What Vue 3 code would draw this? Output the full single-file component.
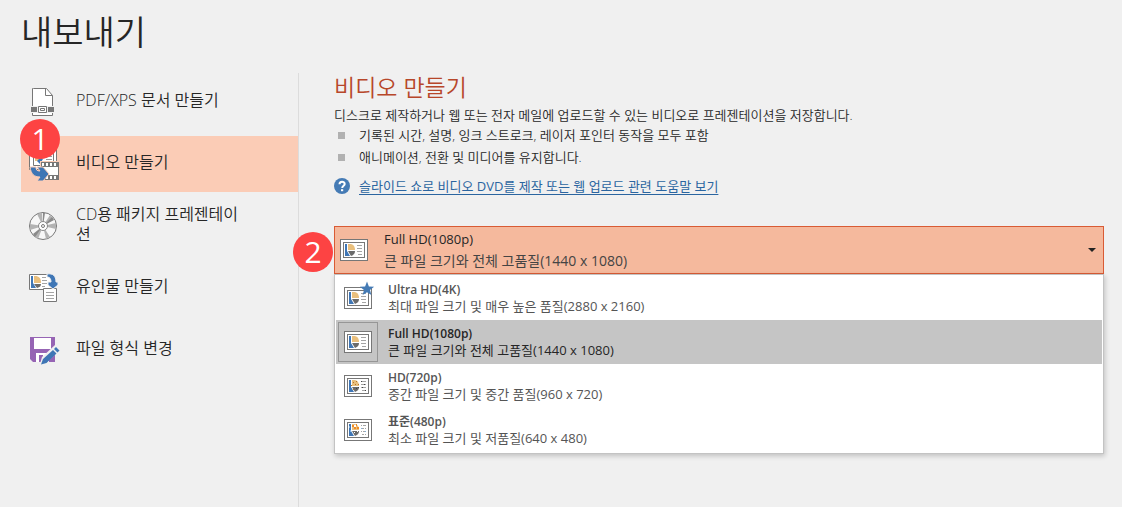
<script setup>
import { computed, ref } from 'vue'

const tasks = [
  { id: 'pdf', label: 'PDF/XPS 문서 만들기' },
  { id: 'video', label: '비디오 만들기', step: 1 },
  { id: 'cd', label: 'CD용 패키지 프레젠테이션' },
  { id: 'handout', label: '유인물 만들기' },
  { id: 'filetype', label: '파일 형식 변경' },
]
const activeTask = ref('video')

const features = [
  '기록된 시간, 설명, 잉크 스트로크, 레이저 포인터 동작을 모두 포함',
  '애니메이션, 전환 및 미디어를 유지합니다.',
]

const qualities = [
  { id: 'uhd', name: 'Ultra HD(4K)', detail: '최대 파일 크기 및 매우 높은 품질(2880 x 2160)' },
  { id: 'fhd', name: 'Full HD(1080p)', detail: '큰 파일 크기와 전체 고품질(1440 x 1080)' },
  { id: 'hd', name: 'HD(720p)', detail: '중간 파일 크기 및 중간 품질(960 x 720)' },
  { id: 'sd', name: '표준(480p)', detail: '최소 파일 크기 및 저품질(640 x 480)' },
]
const chosen = ref('fhd')
const quality = computed(() => qualities.find((q) => q.id === chosen.value))
const open = ref(true)

function choose(id) {
  chosen.value = id
  open.value = false
}
</script>

<template>
  <div class="page">
    <svg class="defs" aria-hidden="true">
      <symbol id="slide" viewBox="0 0 28 22">
        <rect x=".5" y=".5" width="27" height="21" fill="#fff" stroke="#777" />
        <rect x="3.5" y="3.5" width="21" height="15" fill="#fff" stroke="#777" />
        <path d="M5 5h2v7l3 5H5z" fill="#3f76b5" />
        <path d="M8 5h2c3 0 5 2 5 6H8z" fill="#e9bf7d" />
        <path d="M8 12h7c0 2-1 4-4 5z" fill="#6b6b6b" />
        <path d="M17 6.5h5M17 9.5h5M17 12.5h5M18 15.5h4" stroke="#a5a5a5" />
      </symbol>
    </svg>

    <h1>내보내기</h1>

    <div class="body">
      <nav class="tasks" aria-label="내보내기">
        <button
          v-for="t in tasks"
          :key="t.id"
          type="button"
          class="task"
          :class="{ active: t.id === activeTask }"
          @click="activeTask = t.id"
        >
          <svg v-if="t.id === 'pdf'" class="icon" viewBox="0 0 30 30" aria-hidden="true">
            <path d="M5.500 1.500h13l6 7v20h-20v-27z" fill="#fff" stroke="#777" />
            <path d="M17.500 1.500v7h7" fill="none" stroke="#777" />
            <path d="M2 19h25v7H2z" fill="#f0f0f0" />
            <path d="M3 20h6v5H3zM20 20h6v5h-6z" fill="#777" />
            <path d="M10.500 19.500h8v6h-8z" fill="#fff" stroke="#777" />
            <path d="M12.500 21.500h4v2h-4z" fill="#fff" stroke="#777" />
          </svg>
          <svg v-else-if="t.id === 'video'" class="icon" viewBox="0 0 30 30" aria-hidden="true">
            <path d="M1.500 0v20.500h27V0z" fill="#fff" stroke="#777" />
            <path d="M5.500 0v16.500h20V0z" fill="#fff" stroke="#777" />
            <path d="M7 7h4v5H7z" fill="#e9bf7d" />
            <path d="M9 12l4-4 2 2-3 5z" fill="#3f76b5" />
            <path d="M18 7.500h6M18 10.500h6" stroke="#999" />
            <path d="M12 12h20v20H12z" fill="#fbccb6" />
            <path d="M13 13h18v18H13z" fill="#777" />
            <path d="M14 18h16v8H14z" fill="#fff" />
            <path d="M14 15.500h16M14 28.500h16" stroke="#fff" stroke-width="3" stroke-dasharray="2 2" />
            <path d="M2 18h6c0 3 1 4 4 4l-3-4h6l6 7-6 7H9l3-4c-6 0-9-3-10-10z" fill="#3f76b5" stroke="#fbccb6" />
          </svg>
          <svg v-else-if="t.id === 'cd'" class="icon" viewBox="0 0 30 30" aria-hidden="true">
            <circle cx="15" cy="15" r="13.500" fill="#f7f7f7" stroke="#777" />
            <path d="M15 15 9 3l5-1zM15 15 22 4l4 4zM15 15 2 13v6zM15 15 6 25l4 3zM15 15l3 13 4-2zM15 15l13-3v6z" fill="#b3b3b3" />
            <path d="M15 15 15 2h2zM15 15l9-9 2 3zM15 15 5 23l2 3z" fill="#8a8a8a" />
            <circle cx="15" cy="15" r="4.500" fill="#fff" stroke="#888" />
            <circle cx="15" cy="15" r="1.500" fill="#fff" stroke="#777" />
          </svg>
          <svg v-else-if="t.id === 'handout'" class="icon" viewBox="0 0 30 30" aria-hidden="true">
            <path d="M1.500 1.500h22v15h-22z" fill="#fff" stroke="#777" />
            <path d="M3 3h2v7l3 5H3z" fill="#3f76b5" />
            <path d="M6 3h1c4 0 6 2 6 7H6z" fill="#e9bf7d" />
            <path d="M6 11h7c0 2-1 3-4 4z" fill="#6b6b6b" />
            <path d="M14 4.500h4M14 7.500h5M14 10.500h5M14 13.500h3" stroke="#a5a5a5" />
            <path d="M15.500 15.500h13v13h-13z" fill="#fff" stroke="#777" />
            <path d="M18 19.500h8M18 22.500h8M18 25.500h8" stroke="#a5a5a5" />
            <path d="M19 1c6-1 9 2 9 8h2v3l-5 4-5-4V9h3c0-3-1-5-4-5z" fill="#3f76b5" stroke="#f0f0f0" />
          </svg>
          <svg v-else class="icon" viewBox="0 0 30 30" aria-hidden="true">
            <path d="M2 2h25v25H5l-3-3z" fill="#9664b4" />
            <path d="M6 3h17v11H6z" fill="#fff" />
            <path d="M8 18h13v9H8z" fill="#fff" />
            <path d="M11 20h4v7h-4z" fill="#9664b4" />
            <path d="M12 29 14 22 27 10 32 15 19 27z" fill="#f0f0f0" />
            <path d="M13 29.500 15 24 25 15 28.500 18.500 18.500 28zM26 14l2-2 3.500 3.500-2 2z" fill="#3f76b5" />
          </svg>
          <span class="label">{{ t.label }}</span>
          <span v-if="t.step" class="badge on-task">{{ t.step }}</span>
        </button>
      </nav>

      <main class="panel">
        <h2>비디오 만들기</h2>
        <p class="intro">디스크로 제작하거나 웹 또는 전자 메일에 업로드할 수 있는 비디오로 프레젠테이션을 저장합니다.</p>
        <ul class="features">
          <li v-for="f in features" :key="f">{{ f }}</li>
        </ul>
        <div class="help">
          <svg viewBox="0 0 16 16" aria-hidden="true">
            <circle cx="8" cy="8" r="8" fill="#457bb5" />
            <path d="M5.500 6.300c0-3.300 5.200-3.200 5.200-.3C10.700 7.700 8.200 7.800 8.200 10" fill="none" stroke="#fff" stroke-width="2" />
            <path d="M7 11.200h2.200v2H7z" fill="#fff" />
          </svg>
          <a href="#help">슬라이드 쇼로 비디오 DVD를 제작 또는 웹 업로드 관련 도움말 보기</a>
        </div>

        <div class="picker">
          <button
            type="button"
            class="current"
            aria-haspopup="listbox"
            aria-controls="quality-list"
            :aria-expanded="open"
            @click="open = !open"
          >
            <svg class="slide" aria-hidden="true"><use href="#slide" /></svg>
            <span class="text">
              <span class="name">{{ quality.name }}</span>
              <span class="detail">{{ quality.detail }}</span>
            </span>
            <svg class="arrow" viewBox="0 0 8 4" aria-hidden="true"><path d="M0 0h8L4 4z" fill="#222" /></svg>
          </button>
          <span class="badge on-picker">2</span>

          <div v-show="open" id="quality-list" class="options" role="listbox" aria-label="비디오 품질">
            <button
              v-for="q in qualities"
              :key="q.id"
              type="button"
              role="option"
              class="option"
              :class="{ selected: q.id === chosen }"
              :aria-selected="q.id === chosen"
              @click="choose(q.id)"
            >
              <span class="thumb">
                <svg class="slide" viewBox="0 0 28 22" aria-hidden="true">
                  <use href="#slide" width="28" height="22" />
                  <path
                    v-if="q.id === 'uhd'"
                    d="M23-5.500 24.900-.6l5.200.3L26 3l1.400 5.100L23 5.200l-4.400 2.900L20 3l-4.100-3.300 5.200-.3z"
                    fill="#457bb5"
                  />
                  <path v-if="q.id === 'hd'" d="M9 7h1v1H9zM12 6h1v1h-1zM11 9h1v1h-1zM14 9h1v1h-1zM7 10h1v1H7zM9 14h1v1H9z" fill="#b87425" />
                  <path v-if="q.id === 'hd'" d="M17 6h1v1h-1zM20 9h1v1h-1zM18 12h1v1h-1zM21 15h1v1h-1zM12 13h1v1h-1zM14 12h1v1h-1z" fill="#444" />
                  <path v-if="q.id === 'sd'" d="M8 6h2v2H8zM12 5h1v2h-1zM10 8h2v2h-2zM13 8h2v2h-2z" fill="#f08a24" />
                  <path v-if="q.id === 'sd'" d="M10 6h2v2h-2zM18 6h1v1h-1zM20 9h1v1h-1zM18 12h1v1h-1zM20 15h1v1h-1zM10 13h1v1h-1zM13 12h1v1h-1z" fill="#fff" />
                  <path v-if="q.id === 'sd'" d="M5 7h1v2H5zM6 11h1v2H6zM17 9h1v1h-1zM21 12h1v1h-1z" fill="#7fb2e0" />
                </svg>
              </span>
              <span class="text">
                <span class="name">{{ q.name }}</span>
                <span class="detail">{{ q.detail }}</span>
              </span>
            </button>
          </div>
        </div>
      </main>
    </div>
  </div>
</template>

<style>
body {
  margin: 0;
  background: #f0f0f0;
}
</style>

<style scoped>
.page {
  box-sizing: border-box;
  display: flex;
  flex-direction: column;
  min-height: 100vh;
  padding: 8px 18px 0 21px;
  background: #f0f0f0;
  color: #262626;
  font-family: "Open Sans", "Noto Sans CJK KR", sans-serif;
  font-size: 13px;
  font-weight: 350;
  line-height: 20px;
}
.defs {
  position: absolute;
  width: 0;
  height: 0;
}
h1, h2, p, ul {
  margin: 0;
  padding: 0;
}
h1 {
  margin-bottom: 17px;
  font-size: 34px;
  font-weight: 350;
  line-height: 48px;
}
button {
  margin: 0;
  border: 0;
  padding: 0;
  background: none;
  color: inherit;
  font: inherit;
  text-align: left;
  cursor: pointer;
}
.body {
  display: flex;
  flex: 1;
}
.tasks {
  display: flex;
  flex: 0 0 277px;
  flex-direction: column;
  gap: 6px;
  padding-top: 1px;
  border-right: 1px solid #dcdcdc;
}
.task {
  position: relative;
  display: flex;
  align-items: center;
  gap: 18px;
  min-height: 56px;
  padding: 0 50px 0 7px;
  font-size: 16px;
}
.task.active {
  background: #fbccb6;
}
.task .label {
  padding-bottom: 4px;
  word-break: break-all;
}
.icon {
  flex: none;
  width: 30px;
  height: 30px;
  overflow: visible;
}
.badge {
  position: absolute;
  width: 40px;
  height: 40px;
  border-radius: 50%;
  background: #fd4343;
  color: #fff;
  font-size: 30px;
  font-weight: 400;
  line-height: 40px;
  text-align: center;
}
.on-task {
  top: -17px;
  left: -1px;
}
.on-picker {
  top: 6px;
  left: -41px;
}
.panel {
  flex: 1;
  min-width: 0;
  padding-left: 35px;
}
h2 {
  margin-bottom: 4px;
  color: #b7472a;
  font-size: 23px;
  font-weight: 350;
  line-height: 28px;
}
.features {
  display: grid;
  gap: 2px;
  list-style: none;
}
.features li {
  display: flex;
  align-items: center;
  gap: 14px;
  padding-left: 4px;
}
.features li::before {
  content: "";
  width: 7px;
  height: 7px;
  background: #b1b1b1;
}
.help {
  display: flex;
  align-items: center;
  gap: 9px;
  margin: 9px 0 30px;
  font-weight: 400;
}
.help svg {
  width: 16px;
  height: 16px;
}
.help a {
  color: #2b65a0;
  text-underline-offset: 3px;
}
.picker {
  position: relative;
  font-weight: 400;
}
.current {
  box-sizing: border-box;
  display: flex;
  align-items: center;
  gap: 16px;
  width: 100%;
  border: 1px solid #d95b35;
  padding: 1px 7px 1px 5px;
  background: #f5b99d;
  line-height: 22px;
}
.text {
  display: flex;
  flex: 1;
  flex-direction: column;
}
.current .detail {
  color: #444;
  font-size: 14px;
}
.slide {
  flex: none;
  width: 28px;
  height: 22px;
  overflow: visible;
}
.arrow {
  width: 8px;
  height: 4px;
}
.options {
  position: absolute;
  top: 100%;
  right: 0;
  left: 0;
  display: flex;
  flex-direction: column;
  border: 1px solid #c3c3c3;
  padding: 1px;
  background: #fff;
  box-shadow: 1px 2px 5px rgba(0, 0, 0, 0.2);
}
.option {
  display: flex;
  align-items: center;
  gap: 10px;
  padding: 2px;
  color: #555;
  line-height: 17px;
}
.option .name {
  font-size: 12px;
  font-weight: 600;
}
.thumb {
  display: flex;
  align-items: center;
  justify-content: center;
  box-sizing: border-box;
  width: 40px;
  height: 40px;
  border: 1px solid transparent;
}
.selected {
  background: #c5c5c5;
  color: #262626;
}
.selected .thumb {
  border-color: #969696;
}
</style>
